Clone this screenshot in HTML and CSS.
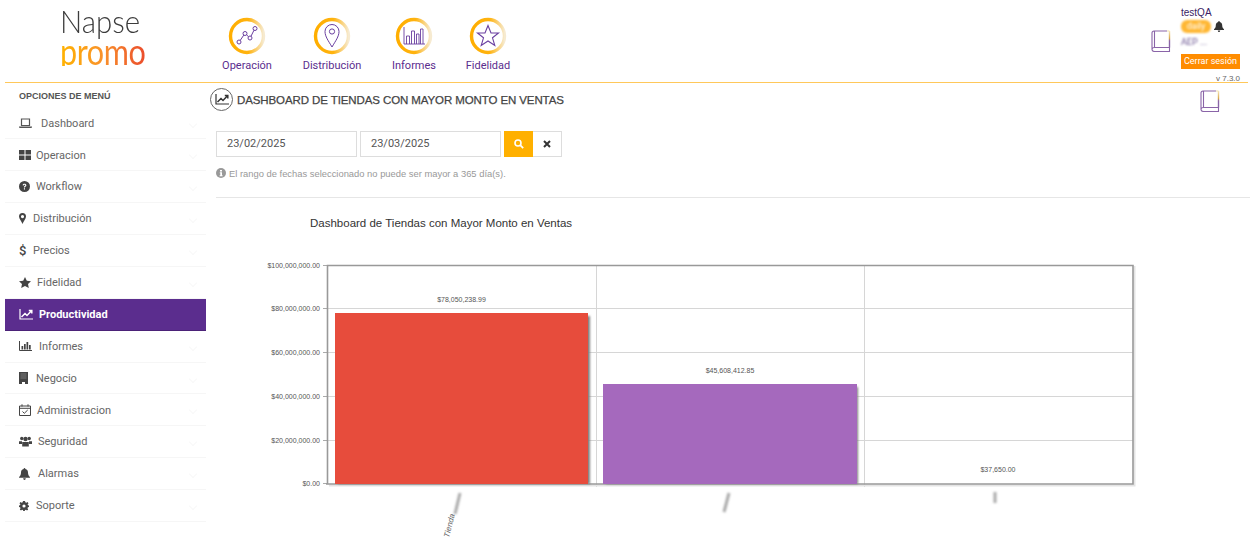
FILE: index.html
```html
<!DOCTYPE html>
<html lang="es">
<head>
<meta charset="utf-8">
<title>Napse promo</title>
<link rel="stylesheet" href="styles.css">
</head>
<body>
<svg class="defs" width="0" height="0" aria-hidden="true">
  <defs>
    <linearGradient id="ring" x1="0" x2="1" y1="0" y2="0">
      <stop offset="0" stop-color="#ffae00"/><stop offset="0.55" stop-color="#ffb30f"/><stop offset="1" stop-color="#f6ead0"/>
    </linearGradient>
    <linearGradient id="spine" gradientUnits="userSpaceOnUse" x1="0" x2="0" y1="1" y2="17.5">
      <stop offset="0" stop-color="#f7e6b8"/><stop offset="0.45" stop-color="#d9a94a"/><stop offset="0.6" stop-color="#8a64a8"/><stop offset="1" stop-color="#8a64a8"/>
    </linearGradient>
    <symbol id="book" viewBox="0 0 20 22">
      <path d="M16 1H3C2 1 1 2 1 3V19.5C1 20.5 2 21.5 3.5 21.5H18.5V17.5H3.5C2 17.5 1 18.5 1 19.5M3.5 1V17" fill="none" stroke="#8a64a8" stroke-width="1.1"/>
      <path d="M16 1H18.5" fill="none" stroke="#f3e2b5" stroke-width="1.1"/>
      <path d="M18.5 1V17.5" fill="none" stroke="url(#spine)" stroke-width="1.4"/>
    </symbol>
    <symbol id="trend" viewBox="0 0 14 12">
      <path d="M1 1V11H14" fill="none" stroke="currentColor" stroke-width="1.2"/>
      <path d="M2.5 9L6 5.5L8 7.5L12 3.2M9.8 2.5H12.8V5.5" fill="none" stroke="currentColor" stroke-width="1.5"/>
    </symbol>
  </defs>
</svg>

<header class="topbar">
  <div class="logo">
    <div class="logo-top">Napse</div>
    <div class="logo-bottom">promo</div>
  </div>
  <nav class="topnav">
    <a class="topnav-item topnav-op">
      <svg width="38" height="38" viewBox="0 0 38 38"><circle cx="19" cy="19" r="16.5" fill="#fff" stroke="url(#ring)" stroke-width="3.4"/><g fill="none" stroke="#6a3fa0" stroke-width="1"><circle cx="11" cy="25" r="2"/><circle cx="17" cy="16.5" r="2"/><circle cx="22" cy="21" r="2"/><circle cx="27" cy="11.5" r="2"/><path d="M12.2 23.4L15.8 18.1M18.5 17.8L20.5 19.7M23 19.2L26 13.2"/></g></svg>
      <span>Operación</span>
    </a>
    <a class="topnav-item topnav-dist">
      <svg width="38" height="38" viewBox="0 0 38 38"><circle cx="19" cy="19" r="16.5" fill="#fff" stroke="url(#ring)" stroke-width="3.4"/><g fill="none" stroke="#6a3fa0" stroke-width="1"><path d="M19 30C15.5 24 12 19.5 12 14.5A7 7 0 0 1 26 14.5C26 19.5 22.5 24 19 30Z"/><circle cx="19" cy="14.5" r="2.6"/></g></svg>
      <span>Distribución</span>
    </a>
    <a class="topnav-item topnav-inf">
      <svg width="38" height="38" viewBox="0 0 38 38"><circle cx="19" cy="19" r="16.5" fill="#fff" stroke="url(#ring)" stroke-width="3.4"/><g fill="none" stroke="#6a3fa0" stroke-width=".9"><path d="M9 10V27H30"/><path d="M11.5 27V19H14.5V27M16.5 27V14H19.5V27M21.5 27V17H24V27M25.5 27V12H28V27"/></g></svg>
      <span>Informes</span>
    </a>
    <a class="topnav-item topnav-fid">
      <svg width="38" height="38" viewBox="0 0 38 38"><circle cx="19" cy="19" r="16.5" fill="#fff" stroke="url(#ring)" stroke-width="3.4"/><path d="M19 8.5L22 16H29.5L23.5 20.8L25.8 28.5L19 24L12.2 28.5L14.5 20.8L8.5 16H16Z" fill="none" stroke="#6a3fa0" stroke-width="1.1"/></svg>
      <span>Fidelidad</span>
    </a>
  </nav>
  <svg class="book-top" width="20" height="22"><use href="#book"/></svg>
  <div class="user">
    <div class="user-name">testQA</div>
    <div class="user-row">
      <span class="user-badge"><span class="blurred">daily</span></span>
      <svg width="10" height="11" viewBox="0 0 10 11"><path d="M5 0C5.5 0 5.8.4 5.8.9C7.5 1.3 8.2 2.6 8.2 4.2C8.2 6.5 9 7.4 10 8.2V8.9H0V8.2C1 7.4 1.8 6.5 1.8 4.2C1.8 2.6 2.5 1.3 4.2.9C4.2.4 4.5 0 5 0ZM3.8 9.5H6.2C6.2 10.3 5.7 11 5 11S3.8 10.3 3.8 9.5Z" fill="#333"/></svg>
    </div>
    <div class="user-org"><span class="blurred">AEP ...</span></div>
    <a class="logout">Cerrar sesión</a>
    <div class="version">v 7.3.0</div>
  </div>
</header>

<div class="layout">
  <aside class="sidebar">
    <div class="sidebar-title">OPCIONES DE MENÚ</div>
    <ul class="menu">
      <li class="menu-item"><span class="ico w22"><svg width="13" height="11" viewBox="0 0 13 11"><path d="M2.5 1H10.5V7.5H2.5Z" fill="none" stroke="#555" stroke-width="1.2"/><path d="M0 8.5H13V9.5L12 10H1L0 9.5Z" fill="#555"/></svg></span>Dashboard</li>
      <li class="menu-item"><span class="ico w17"><svg width="12" height="10" viewBox="0 0 12 10"><path d="M0 0H5.5V4.4H0ZM6.5 0H12V4.4H6.5ZM0 5.5H5.5V10H0ZM6.5 5.5H12V10H6.5Z" fill="#444"/></svg></span>Operacion</li>
      <li class="menu-item"><span class="ico w17"><svg width="11" height="11" viewBox="0 0 11 11"><circle cx="5.5" cy="5.5" r="5.5" fill="#444"/><path d="M3.6 4.2C3.8 3.2 4.6 2.8 5.5 2.8C6.6 2.8 7.4 3.4 7.4 4.3C7.4 5.5 6 5.5 6 6.6H4.9C4.9 5 6.2 5 6.2 4.3C6.2 3.9 5.9 3.8 5.5 3.8C5.1 3.8 4.8 4 4.7 4.5ZM4.9 7.2H6V8.4H4.9Z" fill="#fff"/></svg></span>Workflow</li>
      <li class="menu-item"><span class="ico w14"><svg width="7" height="11" viewBox="0 0 7 11"><path fill-rule="evenodd" d="M3.5 0A3.5 3.5 0 0 1 7 3.5C7 5.5 4.5 8.5 3.5 11C2.5 8.5 0 5.5 0 3.5A3.5 3.5 0 0 1 3.5 0ZM3.5 2A1.6 1.6 0 1 0 3.5 5.2A1.6 1.6 0 1 0 3.5 2Z" fill="#444"/></svg></span>Distribución</li>
      <li class="menu-item"><span class="ico w14 dollar">$</span>Precios</li>
      <li class="menu-item"><span class="ico w18"><svg width="12" height="11" viewBox="0 0 12 11"><path d="M6 0L7.8 3.7L12 4.2L9 7L9.8 11L6 9.1L2.2 11L3 7L0 4.2L4.2 3.7Z" fill="#444"/></svg></span>Fidelidad</li>
      <li class="menu-item menu-item-active"><span class="ico w20"><svg width="14" height="12"><use href="#trend"/></svg></span>Productividad</li>
      <li class="menu-item"><span class="ico w20"><svg width="13" height="10" viewBox="0 0 13 10"><path d="M.5 0V9.5H13" fill="none" stroke="#444"/><path d="M2.5 5H4.2V8.5H2.5ZM5 3H6.7V8.5H5ZM7.5 1H9.2V8.5H7.5ZM10 4H11.7V8.5H10Z" fill="#444"/></svg></span>Informes</li>
      <li class="menu-item"><span class="ico w17"><svg width="9" height="12" viewBox="0 0 9 12"><path d="M0 0H9V12H6V10H3V12H0Z" fill="#444"/><path d="M1.5 2H7.5M1.5 4H7.5M1.5 6H7.5" stroke="#888" stroke-width=".8"/></svg></span>Negocio</li>
      <li class="menu-item"><span class="ico w18"><svg width="12" height="12" viewBox="0 0 12 12"><path d="M.5 2H11.5V11.5H.5ZM.5 4.3H11.5M3 .3V2.5M9 .3V2.5" fill="none" stroke="#444"/><path d="M3.5 7.5L5.3 9.3L8.7 6" fill="none" stroke="#444"/></svg></span>Administracion</li>
      <li class="menu-item"><span class="ico w19"><svg width="13" height="11" viewBox="0 0 13 11"><circle cx="2.8" cy="2.5" r="1.7" fill="#444"/><circle cx="10.2" cy="2.5" r="1.7" fill="#444"/><circle cx="6.5" cy="3" r="2.2" fill="#444"/><path d="M0 8V5.2H3L3 8ZM10 8V5.2H13V8ZM3.2 10.5V6H9.8V10.5Z" fill="#444"/></svg></span>Seguridad</li>
      <li class="menu-item"><span class="ico w19"><svg width="11" height="12" viewBox="0 0 10 11"><path d="M5 0C5.5 0 5.8.4 5.8.9C7.5 1.3 8.2 2.6 8.2 4.2C8.2 6.5 9 7.4 10 8.2V8.9H0V8.2C1 7.4 1.8 6.5 1.8 4.2C1.8 2.6 2.5 1.3 4.2.9C4.2.4 4.5 0 5 0ZM3.8 9.5H6.2C6.2 10.3 5.7 11 5 11S3.8 10.3 3.8 9.5Z" fill="#444"/></svg></span>Alarmas</li>
      <li class="menu-item"><span class="ico w17"><svg width="10" height="10" viewBox="0 0 10 10"><path fill-rule="evenodd" d="M4 0H6L6.3 1.3L7.4 1.8L8.5 1L9.5 2.3L8.6 3.4L9 4.3L10 4.5V6L8.9 6.3L8.5 7.3L9.2 8.4L8 9.5L7 8.7L6 9L5.8 10H4.2L4 9L3 8.7L2 9.5L.8 8.4L1.5 7.3L1.1 6.3L0 6V4.5L1 4.3L1.4 3.4L.5 2.3L1.5 1L2.6 1.8L3.7 1.3ZM5 3.4A1.6 1.6 0 1 0 5 6.6A1.6 1.6 0 1 0 5 3.4Z" fill="#444"/></svg></span>Soporte</li>
    </ul>
  </aside>

  <main class="content">
    <div class="page-title">
      <span class="page-title-icon"><svg width="14" height="12"><use href="#trend"/></svg></span>
      <h1>DASHBOARD DE TIENDAS CON MAYOR MONTO EN VENTAS</h1>
      <svg class="book-title" width="20" height="22"><use href="#book"/></svg>
    </div>
    <div class="filters">
      <div class="date-input">23/02/2025</div>
      <div class="date-input">23/03/2025</div>
      <div class="btn-group">
        <button class="btn btn-search" type="button"><svg width="10" height="10" viewBox="0 0 10 10"><circle cx="4" cy="4" r="3" fill="none" stroke="#fff" stroke-width="1.6"/><path d="M6.2 6.2L9.2 9.2" stroke="#fff" stroke-width="1.8"/></svg></button>
        <button class="btn btn-clear" type="button"><svg width="8" height="8" viewBox="0 0 8 8"><path d="M1 1L7 7M7 1L1 7" stroke="#333" stroke-width="2"/></svg></button>
      </div>
    </div>
    <p class="hint"><svg width="10" height="10" viewBox="0 0 10 10"><circle cx="5" cy="5" r="5" fill="#999"/><path d="M4 2H6V3.4H4ZM3.8 4.2H6V7.2H6.6V8.2H3.6V7.2H4.3V5.2H3.8Z" fill="#fff"/></svg>El rango de fechas seleccionado no puede ser mayor a 365 día(s).</p>
    <div class="rule"></div>

    <svg class="chart" width="1022" height="335" viewBox="216 210 1022 335" role="img">
      <defs>
        <filter id="soft" x="-10%" y="-10%" width="130%" height="120%"><feGaussianBlur stdDeviation="1.3"/></filter>
        <filter id="smudge" filterUnits="userSpaceOnUse" x="430" y="480" width="600" height="50"><feGaussianBlur stdDeviation="1.3"/></filter>
      </defs>
      <text class="chart-title" x="310" y="227">Dashboard de Tiendas con Mayor Monto en Ventas</text>

      <g class="grid">
        <path d="M328 308.5H1133M328 352.5H1133M328 396.5H1133M328 440.5H1133M596.5 265V487M864.5 265V487"/>
      </g>
      <g class="ticks">
        <path d="M323 265.5H328M323 308.5H328M323 352.5H328M323 396.5H328M323 440.5H328M323 483.5H328"/>
      </g>
      <path class="frame-shadow" d="M329 485.5H1134.5V266"/>
      <path class="frame" d="M327.5 484V265.5H1133V484H326"/>

      <g class="ylabels">
        <text x="320" y="268">$100,000,000.00</text>
        <text x="320" y="311">$80,000,000.00</text>
        <text x="320" y="355">$60,000,000.00</text>
        <text x="320" y="399">$40,000,000.00</text>
        <text x="320" y="443">$20,000,000.00</text>
        <text x="320" y="486">$0.00</text>
      </g>

      <rect class="shadow" x="338" y="316" width="252" height="168" filter="url(#soft)"/>
      <rect class="shadow" x="606" y="387" width="252" height="97" filter="url(#soft)"/>
      <rect x="335" y="313" width="253" height="171" fill="#e74c3c"/>
      <rect x="603" y="384" width="254" height="100" fill="#a569bd"/>

      <g class="values">
        <text x="461.5" y="302">$78,050,238.99</text>
        <text x="730" y="373">$45,608,412.85</text>
        <text x="998" y="472">$37,650.00</text>
      </g>

      <g class="xlabels">
        <text transform="translate(449 538) rotate(-76)">Tienda</text>
        <path d="M455 514L460 493" filter="url(#smudge)"/>
        <path d="M724 512L729 493" filter="url(#smudge)"/>
        <path d="M995 503V492" filter="url(#smudge)"/>
      </g>
    </svg>
  </main>
</div>
</body>
</html>
```

FILE: styles.css
```css
* { box-sizing: border-box; }
html, body { margin: 0; padding: 0; height: 550px; overflow: hidden; background: #fff; }
body { font-family: Roboto, "Liberation Sans", sans-serif; color: #555; }
.defs { position: absolute; }

.topbar {
  display: flex;
  height: 83px;
  margin: 0 12px 0 5px;
  border-bottom: 1px solid #ffc85a;
}
.logo { width: 90px; margin-left: 55px; flex: 0 0 auto; font-family: Lato, sans-serif; font-weight: 300; line-height: 30px; padding-top: 6px; }
.logo-top { color: #3c3c3c; font-size: 32px; transform: scaleX(.92); transform-origin: left center; }
.logo-bottom {
  width: 102px;
  background: linear-gradient(90deg, #ffb300, #f9912b 50%, #ea4a2c);
  -webkit-background-clip: text;
  background-clip: text;
  color: transparent;
  font-size: 36px;
  font-weight: 400;
  letter-spacing: -.5px;
  transform: scaleX(.85);
  transform-origin: left center;
}
.topnav { display: flex; margin-left: 67px; padding-top: 17px; }
.topnav-item { display: flex; flex-direction: column; align-items: center; gap: 4px; font-size: 11px; line-height: 13px; color: #5b2d8e; width: 60px; }
.topnav-item svg { flex: 0 0 auto; }
.topnav-dist { margin-left: 25px; }
.topnav-inf { margin-left: 22px; }
.topnav-fid { margin-left: 14px; }

.book-top { margin: 30px 0 0 auto; }
.user { width: 59px; margin: 0 8px 0 10px; font-size: 9px; padding-top: 7px; position: relative; }
.user-name { font-family: "Liberation Sans", sans-serif; font-size: 10px; line-height: 11px; color: #3a1d63; }
.user-row { display: flex; align-items: center; gap: 3px; height: 14px; margin-top: 1px; }
.user-badge { width: 30px; height: 13px; border-radius: 6px; background: #ffb733; color: #fff; text-align: center; line-height: 13px; filter: blur(1px); }
.user-org { height: 16px; line-height: 19px; color: #66508f; filter: blur(1.2px); }
.logout { display: block; height: 15px; margin-top: 5px; background: #ff8c00; color: #fff; font-size: 9px; line-height: 15px; text-align: center; white-space: nowrap; }
.version { position: absolute; right: 0; top: 74px; font-family: "Liberation Sans", sans-serif; font-size: 8px; line-height: 9px; color: #666; white-space: nowrap; }

.layout { display: flex; margin-left: 5px; }
.sidebar { width: 201px; flex: 0 0 auto; }
.sidebar-title { height: 24.5px; padding: 8px 0 0 14px; font-family: "Liberation Sans", sans-serif; font-size: 9px; font-weight: 700; line-height: 10px; color: #555; }
.menu { list-style: none; margin: 0; padding: 0; }
.menu-item {
  display: flex;
  align-items: center;
  height: 31.875px;
  padding-left: 14px;
  padding-top: .5px;
  border-bottom: 1px solid #f6f6f6;
  font-size: 11px;
  color: #666;
  position: relative;
}
.menu-item::after {
  content: "";
  position: absolute;
  right: 10px;
  top: 13px;
  width: 5px;
  height: 5px;
  border-right: 1px solid #f8f8f8;
  border-bottom: 1px solid #f8f8f8;
  transform: rotate(45deg);
}
.menu-item-active { background: #5b2d8e; color: #fff; font-weight: 700; border-bottom-color: #4b2278; }
.menu-item-active::after { display: none; }
.ico { display: flex; align-items: center; flex: 0 0 auto; }
.w14 { width: 14px; }
.w17 { width: 17px; }
.w18 { width: 18px; }
.w19 { width: 19px; }
.w20 { width: 20px; }
.w22 { width: 22px; }
.dollar { font-size: 13px; font-weight: 500; color: #444; }

.content { flex: 1 1 auto; padding: 4px 10px 0 4px; min-width: 0; }
.page-title { display: flex; align-items: center; height: 24px; gap: 4px; }
.page-title-icon { display: flex; align-items: center; justify-content: center; width: 23px; height: 23px; border: 1px solid #666; border-radius: 50%; color: #333; }
.page-title h1 { margin: 2px 0 0; font-family: "Liberation Sans", sans-serif; font-size: 11.5px; font-weight: 400; -webkit-text-stroke: .25px #444; color: #444; letter-spacing: -.1px; }
.book-title { margin: 0 30px 0 auto; position: relative; top: 2px; }

.filters { display: flex; margin: 20px 0 0 6px; gap: 3px; }
.date-input { width: 141px; height: 26px; border: 1px solid #ddd; padding-left: 10px; font-size: 11px; line-height: 24px; color: #555; }
.btn-group { display: flex; }
.btn { display: flex; align-items: center; justify-content: center; height: 26px; padding: 0; border: 0; background: #fff; }
.btn-search { width: 29px; background: #ffb000; }
.btn-clear { width: 29px; border: 1px solid #ddd; border-left: 0; }

.hint { display: flex; align-items: center; gap: 3px; margin: 10px 0 0 6px; height: 12px; font-family: "Liberation Sans", sans-serif; font-size: 9.4px; color: #999; }
.rule { height: 1px; margin: 18px 0 0 6px; background: #e6e6e6; }
.chart { display: block; margin: 12px 0 0 6px; }
.chart-title { font-family: "Liberation Sans", sans-serif; font-size: 11.5px; fill: #333; }
.grid path, .ticks path { fill: none; stroke: #d6d6d6; stroke-width: 1; }
.ticks path { stroke: #aaa; }
.frame { fill: none; stroke: #999; stroke-width: 1.6; }
.frame-shadow { fill: none; stroke: #e4e4e4; stroke-width: 2; }
.shadow { fill: #808080; }
.ylabels text { font-family: "Liberation Sans", sans-serif; font-size: 7px; fill: #555; text-anchor: end; }
.values text { font-family: "Liberation Sans", sans-serif; font-size: 7px; fill: #555; text-anchor: middle; }
.xlabels text { font-family: "Liberation Sans", sans-serif; font-size: 8px; font-style: italic; fill: #666; }
.xlabels path { fill: none; stroke: #aaa; stroke-width: 3; }
```
